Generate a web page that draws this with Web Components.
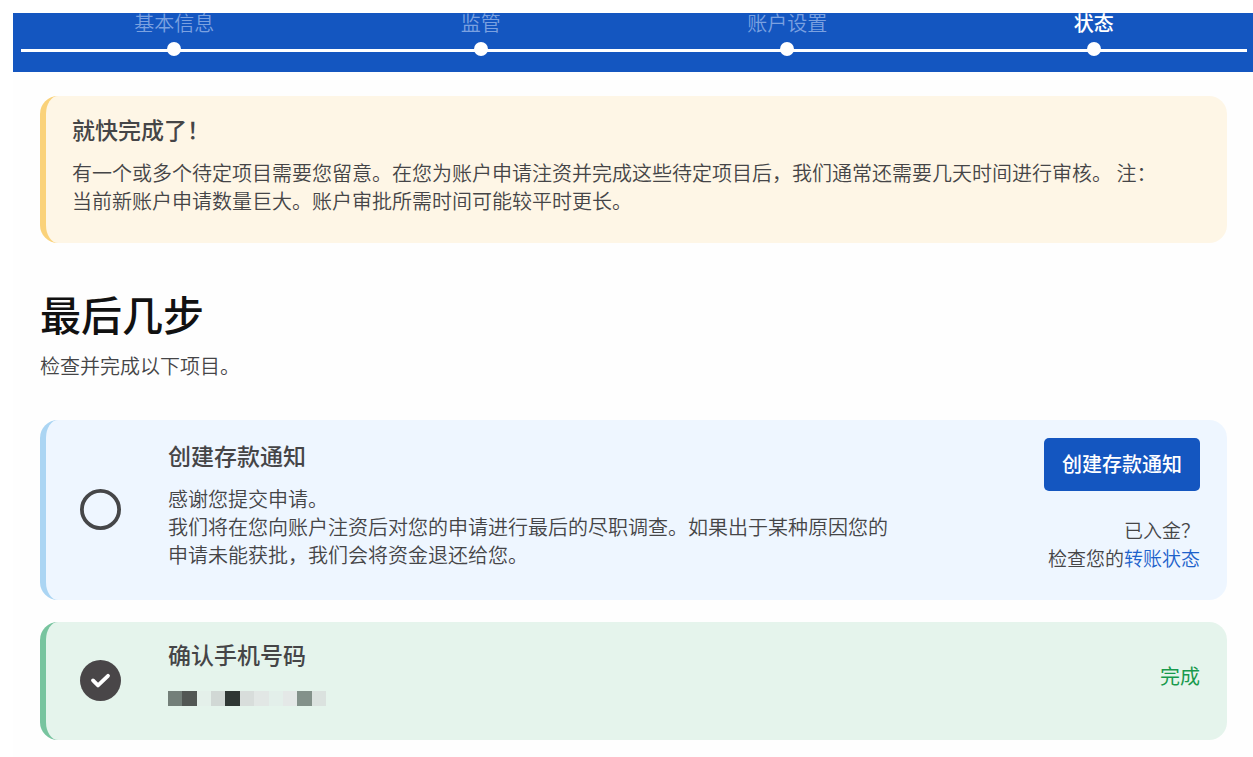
<!DOCTYPE html>
<html lang="zh-CN">
<head>
<meta charset="utf-8">
<meta name="viewport" content="width=device-width, initial-scale=1">
<title>最后几步</title>
<style>
  body {
    margin: 0;
    background: #fff;
    color: #454547;
    font: 350 20px/28px "Noto Sans CJK SC", sans-serif;
  }
</style>
</head>
<body>
<application-status></application-status>

<script>
const define = (name, html, ready) => {
  const template = document.createElement('template');
  template.innerHTML = html;
  customElements.define(name, class extends HTMLElement {
    constructor() {
      super();
      this.attachShadow({ mode: 'open' }).append(template.content.cloneNode(true));
    }
    connectedCallback() {
      if (ready) ready(this, this.shadowRoot);
    }
  });
};

define('progress-step', `
  <style>
    :host { display: flex; flex-direction: column; align-items: center; gap: 9px; color: #7ba1e0; line-height: 20px; }
    :host([current]) { color: #fff; font-weight: 500; }
    .dot { width: 14px; height: 14px; border-radius: 50%; background: #fff; }
  </style>
  <span><slot></slot></span>
  <span class="dot"></span>
`, host => host.setAttribute('role', 'listitem'));

define('progress-bar', `
  <style>
    :host { display: block; background: #1456c0; padding: 0 6px 16px 8px; }
    .steps { position: relative; display: grid; grid-template-columns: repeat(4, 1fr); }
    .steps::before { content: ""; position: absolute; left: 0; right: 0; bottom: 4px; height: 3px; background: #fff; }
  </style>
  <div class="steps" role="list"><slot></slot></div>
`);

define('notice-card', `
  <style>
    :host { display: block; box-sizing: border-box; border-left: 6px solid #fad27a; border-radius: 18px;
            background: #fef6e6; padding: 17px 56px 28px 26px; }
    h2 { margin: 0 0 14px; font-size: 23px; line-height: 32px; font-weight: 500; }
    p { margin: 0; }
  </style>
  <h2><slot name="title"></slot></h2>
  <p><slot></slot></p>
`);

define('status-mark', `
  <style>
    :host { display: block; width: 41px; height: 41px; }
    svg { display: block; width: 100%; height: 100%; }
    .done, :host([done]) .open { display: none; }
    :host([done]) .done { display: block; }
  </style>
  <svg class="open" viewBox="0 0 41 41" role="img" aria-label="待完成">
    <circle cx="20.5" cy="20.5" r="18.6" fill="none" stroke="#454648" stroke-width="3.8"/>
  </svg>
  <svg class="done" viewBox="0 0 41 41" role="img" aria-label="已完成">
    <circle cx="20.5" cy="20.5" r="20.5" fill="#494648"/>
    <path d="M13 20.4l5 5L28 15.8" fill="none" stroke="#fff" stroke-width="3.8" stroke-linecap="round" stroke-linejoin="round"/>
  </svg>
`);

define('masked-number', `
  <style>
    :host { display: flex; align-items: center; height: 28px; }
    svg { display: block; width: 158px; height: 15px; }
  </style>
  <svg viewBox="0 0 11 1" preserveAspectRatio="none" shape-rendering="crispEdges" role="img" aria-label="已隐藏的号码"></svg>
`, (host, root) => {
  const shades = ['#737f79', '#525754', '#e4f0ea', '#d1d8d5', '#2f3734', '#d8dddb', '#e2e7e5', '#e3efea', '#e4e8e7', '#83918a', '#dbe2df'];
  root.querySelector('svg').innerHTML = shades.map((c, i) => `<rect x="${i}" width="1" height="1" fill="${c}"/>`).join('');
});

define('task-card', `
  <style>
    :host { display: grid; grid-template-columns: 41px minmax(0, 738px) 1fr; column-gap: 47px; box-sizing: border-box;
            border-left: 6px solid #abd5f3; border-radius: 18px; background: #eef6ff; padding: 0 27px 0 34px; }
    :host([done]) { border-left-color: #78c49f; background: #e5f4ec; }
    status-mark { align-self: center; margin-bottom: 2px; }
    .main { padding: 19px 0 26px; }
    :host([done]) .main { padding: 16px 0 28px; }
    .side { align-self: center; padding: 18px 0 28px; display: flex; flex-direction: column; align-items: flex-end; gap: 25px; }
    h2 { margin: 0 0 14px; font-size: 23px; line-height: 32px; font-weight: 500; }
  </style>
  <status-mark></status-mark>
  <div class="main"><h2><slot name="title"></slot></h2><slot></slot></div>
  <div class="side"><slot name="side"></slot></div>
`, (host, root) => root.querySelector('status-mark').toggleAttribute('done', host.hasAttribute('done')));

define('action-button', `
  <style>
    :host { display: block; }
    button { display: block; margin: 0; border: 0; border-radius: 5px; padding: 12px 18px 13px; background: #1456c0;
             color: #fff; font: inherit; font-weight: 500; white-space: nowrap; cursor: pointer; }
  </style>
  <button type="button"><slot></slot></button>
`);

define('transfer-hint', `
  <style>
    :host { display: block; font-size: 19px; text-align: right; white-space: nowrap; }
    p { margin: 0; }
    a { color: #1d62cb; text-decoration: none; }
  </style>
  <p>已入金？</p>
  <p>检查您的<a href="#transfer">转账状态</a></p>
`);

define('application-status', `
  <style>
    :host { display: block; padding: 13px 0 0 13px; }
    .page { background: #fefefe; }
    main { padding: 24px 26px 17px 27px; }
    h1 { margin: 46px 0 15px; color: #111; font-size: 41px; line-height: 48px; font-weight: 500; }
    .lead { margin: 0 0 40px; }
    .tasks { display: grid; gap: 22px; }
    p { margin: 0; }
    .done { color: #199a4c; font-weight: 400; }
  </style>
  <div class="page">
    <progress-bar>
      <progress-step>基本信息</progress-step>
      <progress-step>监管</progress-step>
      <progress-step>账户设置</progress-step>
      <progress-step current aria-current="step">状态</progress-step>
    </progress-bar>
    <main>
      <notice-card>
        <span slot="title">就快完成了！</span>
        有一个或多个待定项目需要您留意。在您为账户申请注资并完成这些待定项目后，我们通常还需要几天时间进行审核。 注：当前新账户申请数量巨大。账户审批所需时间可能较平时更长。
      </notice-card>
      <h1>最后几步</h1>
      <p class="lead">检查并完成以下项目。</p>
      <div class="tasks">
        <task-card>
          <span slot="title">创建存款通知</span>
          <p>感谢您提交申请。</p>
          <p>我们将在您向账户注资后对您的申请进行最后的尽职调查。如果出于某种原因您的申请未能获批，我们会将资金退还给您。</p>
          <action-button slot="side">创建存款通知</action-button>
          <transfer-hint slot="side"></transfer-hint>
        </task-card>
        <task-card done>
          <span slot="title">确认手机号码</span>
          <masked-number></masked-number>
          <span slot="side" class="done">完成</span>
        </task-card>
      </div>
    </main>
  </div>
`);
</script>
</body>
</html>
